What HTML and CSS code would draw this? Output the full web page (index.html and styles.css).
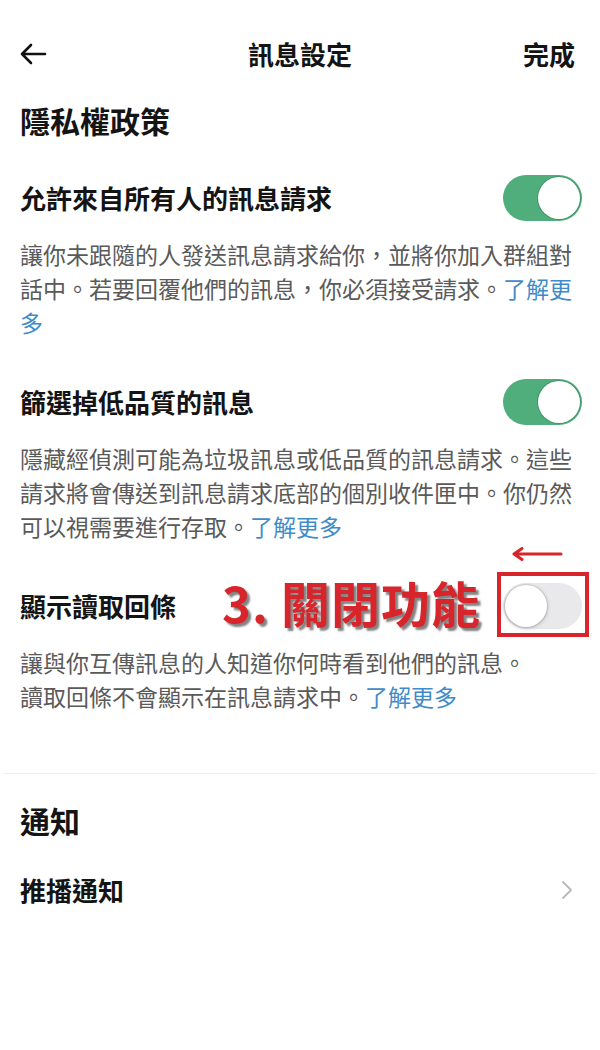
FILE: index.html
```html
<!DOCTYPE html>
<html lang="zh-Hant">
<head>
<meta charset="utf-8">
<title>訊息設定</title>
<link rel="stylesheet" href="styles.css">
</head>
<body>
<header class="topbar">
  <svg class="back" width="28" height="24" viewBox="0 0 28 24"><path d="M26 12H3M12 3L3 12L12 21" fill="none" stroke="#111" stroke-width="2.6" stroke-linecap="round" stroke-linejoin="round"/></svg>
  <h1 class="topbar-title">訊息設定</h1>
  <span class="topbar-done">完成</span>
</header>

<main class="content">
  <h2 class="section-title">隱私權政策</h2>

  <div class="setting setting-first">
    <div class="setting-row">
      <span class="setting-title">允許來自所有人的訊息請求</span>
      <span class="toggle on"></span>
    </div>
    <p class="setting-desc">讓你未跟隨的人發送訊息請求給你，並將你加入群組對話中。若要回覆他們的訊息，你必須接受請求。<span class="link">了解更多</span></p>
  </div>

  <div class="setting">
    <div class="setting-row">
      <span class="setting-title">篩選掉低品質的訊息</span>
      <span class="toggle on"></span>
    </div>
    <p class="setting-desc">隱藏經偵測可能為垃圾訊息或低品質的訊息請求。這些請求將會傳送到訊息請求底部的個別收件匣中。你仍然可以視需要進行存取。<span class="link">了解更多</span></p>
  </div>

  <div class="setting">
    <div class="setting-row annotated">
      <span class="setting-title">顯示讀取回條</span>
      <span class="toggle off"></span>
      <span class="note-text">3. 關閉功能</span>
      <span class="note-box"></span>
      <svg class="note-arrow" width="52" height="14" viewBox="0 0 52 14"><path d="M50 7H3M11 1.5L3 7L11 12.5" fill="none" stroke="#d8242b" stroke-width="3" stroke-linecap="round" stroke-linejoin="round"/></svg>
    </div>
    <p class="setting-desc">讓與你互傳訊息的人知道你何時看到他們的訊息。<br>讀取回條不會顯示在訊息請求中。<span class="link">了解更多</span></p>
  </div>
</main>

<hr class="divider">

<section class="content">
  <h2 class="section-title section-notify">通知</h2>
  <div class="nav-row">
    <span class="nav-title">推播通知</span>
    <svg class="chevron" width="12" height="20" viewBox="0 0 12 20"><path d="M2 2L10 10L2 18" fill="none" stroke="#b8b8b8" stroke-width="1.8" stroke-linecap="round" stroke-linejoin="round"/></svg>
  </div>
</section>
</body>
</html>
```

FILE: styles.css
```css
* { box-sizing: border-box; }

body {
  margin: 0;
  background: #fff;
  color: #141414;
  font-family: "Noto Sans CJK TC", "Noto Sans", sans-serif;
}

.topbar {
  height: 100px;
  padding: 8px 25px 0 19px;
  display: flex;
  align-items: center;
  justify-content: space-between;
  position: relative;
}

.back { display: block; }

.topbar-title {
  margin: 0;
  font-size: 26px;
  font-weight: 700;
  line-height: 36px;
  position: absolute;
  left: 0;
  right: 0;
  text-align: center;
  pointer-events: none;
}

.topbar-done {
  font-size: 26px;
  font-weight: 700;
  line-height: 36px;
}

.content {
  padding: 0 18px 0 20px;
}

.section-title {
  margin: 0;
  font-size: 30px;
  font-weight: 700;
  line-height: 40px;
}

.setting { margin-top: 40px; }
.setting-first { margin-top: 35px; }

.setting-row {
  height: 46px;
  display: flex;
  align-items: center;
  justify-content: space-between;
}

.annotated { position: relative; }

.setting-title {
  font-size: 26px;
  font-weight: 700;
  line-height: 36px;
}

.setting-desc {
  margin: 16px 0 0;
  font-size: 23px;
  line-height: 34px;
  color: #5a5a5a;
}

.link { color: #3f8cc8; }

.toggle {
  flex: none;
  width: 79px;
  height: 46px;
  border-radius: 23px;
  position: relative;
}

.toggle::after {
  content: "";
  position: absolute;
  top: 2px;
  width: 42px;
  height: 42px;
  border-radius: 50%;
  background: #fff;
}

.toggle.on { background: #4fae7b; }
.toggle.on::after {
  right: 2px;
  box-shadow: 0 0 0 1px rgba(40, 100, 70, 0.35);
}

.toggle.off { background: #e9e9eb; }
.toggle.off::after {
  left: 2px;
  box-shadow: 0 1px 4px rgba(0, 0, 0, 0.25), 0 0 0 1px rgba(0, 0, 0, 0.08);
}

.note-text {
  position: absolute;
  left: 202px;
  top: -9px;
  font-size: 49px;
  font-weight: 700;
  line-height: 56px;
  letter-spacing: 1px;
  color: #d8242b;
  -webkit-text-stroke: 5px #fff;
  paint-order: stroke fill;
  text-shadow: 3px 3px 2px rgba(90, 90, 90, 0.75);
  white-space: nowrap;
}

.note-box {
  position: absolute;
  left: 477px;
  top: -11px;
  width: 92px;
  height: 65px;
  border: 4px solid #d8242b;
}

.note-arrow {
  position: absolute;
  left: 491px;
  top: -36px;
}

.divider {
  margin: 60px 4px 0;
  border: 0;
  height: 1px;
  background: #ececec;
}

.section-notify { margin-top: 26px; }

.nav-row {
  margin-top: 30px;
  height: 40px;
  display: flex;
  align-items: center;
  justify-content: space-between;
  padding-right: 9px;
}

.nav-title {
  font-size: 26px;
  font-weight: 700;
  line-height: 40px;
}

.chevron { display: block; }
```
